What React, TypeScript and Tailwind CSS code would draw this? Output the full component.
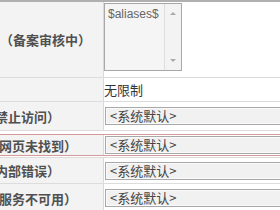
const cjk = "font-['Noto_Sans_CJK_SC','Noto_Sans',sans-serif]";

const Label = ({ text, shift }: { text: string; shift: string }) => (
  <div className="w-[104px] shrink-0 self-stretch bg-[#f3f3f3] border-r border-[#d9d9d9] overflow-hidden flex items-center">
    <span className={`${shift} whitespace-nowrap text-[13px] font-bold text-[#505050] leading-none ${cjk}`}>
      {text}
    </span>
  </div>
);

const SelectBox = () => (
  <div className={`ml-[1px] shrink-0 w-[200px] h-[18px] border border-[#a8a8a8] bg-[#f1f1f1] shadow-[inset_0_0_0_1px_#fafafa] pl-[4px] flex items-center text-[13px] text-[#444] whitespace-nowrap ${cjk}`}>
    &lt;系统默认&gt;
  </div>
);

const App = () => {
  return (
    <div className="w-[280px] h-[210px] overflow-hidden bg-white border-t-2 border-[#b0b0b0]">
      <div className="flex h-[76px] border-b border-[#dcdcdc]">
        <Label text="（备案审核中）" shift="ml-0" />
        <div className="flex-1 pt-[1px]">
          <div className="w-[78px] h-[68px] border border-[#a8a8a8] bg-[#f5f5f5] flex">
            <div className="flex-1 pl-[3px] pt-[3px] text-[12px] leading-[14px] text-[#666] font-['Liberation_Sans',sans-serif]">
              $aliases$
            </div>
            <div className="w-[17px] border-l border-[#dddddd] bg-[#f3f3f3] flex flex-col items-center justify-between py-[8px]">
              <div className="w-0 h-0 border-x-[3px] border-x-transparent border-b-[3px] border-b-[#aaa]" />
              <div className="w-0 h-0 border-x-[3px] border-x-transparent border-t-[3px] border-t-[#aaa]" />
            </div>
          </div>
        </div>
      </div>
      <div className="flex h-[24px] border-b border-[#dcdcdc]">
        <div className="w-[104px] shrink-0 bg-[#f3f3f3] border-r border-[#d9d9d9]" />
        <div className={`flex items-center text-[13px] text-[#333] ${cjk}`}>无限制</div>
      </div>
      <div className="flex h-[29px] border-b border-[#dcdcdc] items-center">
        <Label text="禁止访问）" shift="-ml-[5px]" />
        <SelectBox />
      </div>
      <div className="h-[27px] border-b border-[#dcdcdc] pt-[3px]">
        <div className="flex h-[22px] border-y border-[#d79a9a] items-center">
          <Label text="网页未找到）" shift="-ml-[1px]" />
          <SelectBox />
        </div>
      </div>
      <div className="flex h-[26px] border-b border-[#dcdcdc] items-center">
        <Label text="内部错误）" shift="-ml-[5px]" />
        <SelectBox />
      </div>
      <div className="flex h-[28px] items-center">
        <Label text="服务不可用）" shift="-ml-[1px]" />
        <SelectBox />
      </div>
    </div>
  );
};

export default App;
